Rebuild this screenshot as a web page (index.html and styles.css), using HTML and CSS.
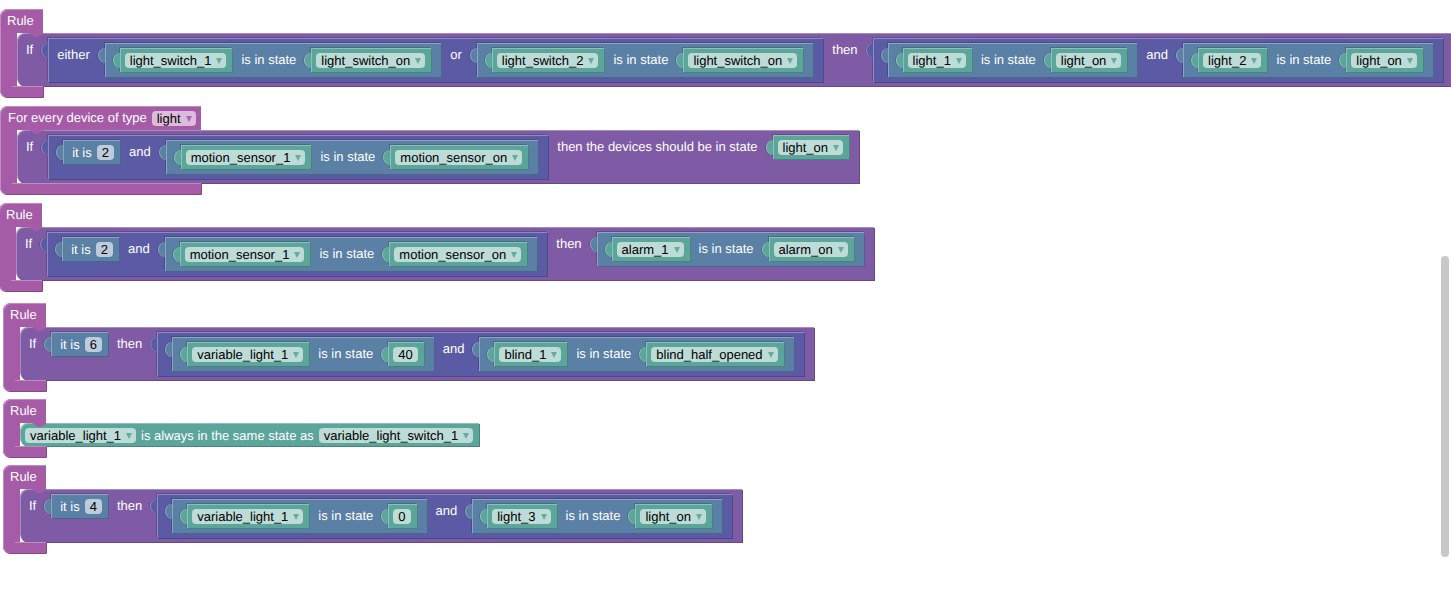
FILE: index.html
```html
<!DOCTYPE html>
<html>
<head>
<meta charset="utf-8">
<link rel="stylesheet" href="styles.css">
</head>
<body>
<div class="canvas">

  <!-- Rule 1 -->
  <div class="tl r1 rule c-pink">
    <div class="head w-rule">Rule</div>
    <div class="body">
      <div class="blk stmt c-purple">
        <span class="lbl">If</span>
        <div class="blk val c-blue">
          <span class="lbl">either</span>
          <div class="blk val c-steel">
            <div class="blk val fb c-teal"><span class="fld">light_switch_1<i class="arr"></i></span></div>
            <span class="lbl">is in state</span>
            <div class="blk val fb c-teal"><span class="fld">light_switch_on<i class="arr"></i></span></div>
          </div>
          <span class="lbl">or</span>
          <div class="blk val c-steel">
            <div class="blk val fb c-teal"><span class="fld">light_switch_2<i class="arr"></i></span></div>
            <span class="lbl">is in state</span>
            <div class="blk val fb c-teal"><span class="fld">light_switch_on<i class="arr"></i></span></div>
          </div>
        </div>
        <span class="lbl">then</span>
        <div class="blk val c-blue">
          <div class="blk val c-steel">
            <div class="blk val fb c-teal"><span class="fld">light_1<i class="arr"></i></span></div>
            <span class="lbl">is in state</span>
            <div class="blk val fb c-teal"><span class="fld">light_on<i class="arr"></i></span></div>
          </div>
          <span class="lbl">and</span>
          <div class="blk val c-steel">
            <div class="blk val fb c-teal"><span class="fld">light_2<i class="arr"></i></span></div>
            <span class="lbl">is in state</span>
            <div class="blk val fb c-teal"><span class="fld">light_on<i class="arr"></i></span></div>
          </div>
        </div>
      </div>
    </div>
    <div class="foot w-rule"></div>
  </div>

  <!-- Rule 2: For every device -->
  <div class="tl r2 rule c-pink">
    <div class="head head-type w-type"><span class="htxt">For every device of type</span><span class="fld">light<i class="arr"></i></span></div>
    <div class="body">
      <div class="blk stmt c-purple">
        <span class="lbl">If</span>
        <div class="blk val c-blue">
          <div class="blk val fb c-steel"><span class="lbl">it is</span><span class="fld">2</span></div>
          <span class="lbl">and</span>
          <div class="blk val c-steel">
            <div class="blk val fb c-teal"><span class="fld">motion_sensor_1<i class="arr"></i></span></div>
            <span class="lbl">is in state</span>
            <div class="blk val fb c-teal"><span class="fld">motion_sensor_on<i class="arr"></i></span></div>
          </div>
        </div>
        <span class="lbl">then the devices should be in state</span>
        <div class="blk val fb c-teal"><span class="fld">light_on<i class="arr"></i></span></div>
      </div>
    </div>
    <div class="foot w-type"></div>
  </div>

  <!-- Rule 3 -->
  <div class="tl r3 rule c-pink">
    <div class="head w-rule">Rule</div>
    <div class="body">
      <div class="blk stmt c-purple">
        <span class="lbl">If</span>
        <div class="blk val c-blue">
          <div class="blk val fb c-steel"><span class="lbl">it is</span><span class="fld">2</span></div>
          <span class="lbl">and</span>
          <div class="blk val c-steel">
            <div class="blk val fb c-teal"><span class="fld">motion_sensor_1<i class="arr"></i></span></div>
            <span class="lbl">is in state</span>
            <div class="blk val fb c-teal"><span class="fld">motion_sensor_on<i class="arr"></i></span></div>
          </div>
        </div>
        <span class="lbl">then</span>
        <div class="blk val c-steel">
          <div class="blk val fb c-teal"><span class="fld">alarm_1<i class="arr"></i></span></div>
          <span class="lbl">is in state</span>
          <div class="blk val fb c-teal"><span class="fld">alarm_on<i class="arr"></i></span></div>
        </div>
      </div>
    </div>
    <div class="foot w-rule"></div>
  </div>

  <!-- Rule 4 -->
  <div class="tl r4 rule c-pink">
    <div class="head w-rule">Rule</div>
    <div class="body">
      <div class="blk stmt c-purple">
        <span class="lbl">If</span>
        <div class="blk val fb c-steel"><span class="lbl">it is</span><span class="fld">6</span></div>
        <span class="lbl">then</span>
        <div class="blk val c-blue">
          <div class="blk val c-steel">
            <div class="blk val fb c-teal"><span class="fld">variable_light_1<i class="arr"></i></span></div>
            <span class="lbl">is in state</span>
            <div class="blk val fb c-teal"><span class="fld">40</span></div>
          </div>
          <span class="lbl">and</span>
          <div class="blk val c-steel">
            <div class="blk val fb c-teal"><span class="fld">blind_1<i class="arr"></i></span></div>
            <span class="lbl">is in state</span>
            <div class="blk val fb c-teal"><span class="fld">blind_half_opened<i class="arr"></i></span></div>
          </div>
        </div>
      </div>
    </div>
    <div class="foot w-rule"></div>
  </div>

  <!-- Rule 5 -->
  <div class="tl r5 rule c-pink">
    <div class="head w-rule">Rule</div>
    <div class="body">
      <div class="blk stmt fb same c-teal">
        <span class="fld">variable_light_1<i class="arr"></i></span>
        <span class="lbl">is always in the same state as</span>
        <span class="fld">variable_light_switch_1<i class="arr"></i></span>
      </div>
    </div>
    <div class="foot w-rule"></div>
  </div>

  <!-- Rule 6 -->
  <div class="tl r6 rule c-pink">
    <div class="head w-rule">Rule</div>
    <div class="body">
      <div class="blk stmt c-purple">
        <span class="lbl">If</span>
        <div class="blk val fb c-steel"><span class="lbl">it is</span><span class="fld">4</span></div>
        <span class="lbl">then</span>
        <div class="blk val c-blue">
          <div class="blk val c-steel">
            <div class="blk val fb c-teal"><span class="fld">variable_light_1<i class="arr"></i></span></div>
            <span class="lbl">is in state</span>
            <div class="blk val fb c-teal"><span class="fld">0</span></div>
          </div>
          <span class="lbl">and</span>
          <div class="blk val c-steel">
            <div class="blk val fb c-teal"><span class="fld">light_3<i class="arr"></i></span></div>
            <span class="lbl">is in state</span>
            <div class="blk val fb c-teal"><span class="fld">light_on<i class="arr"></i></span></div>
          </div>
        </div>
      </div>
    </div>
    <div class="foot w-rule"></div>
  </div>

  <div class="vscroll"></div>
</div>
</body>
</html>
```

FILE: styles.css
```css
* { box-sizing: border-box; }

html, body {
  margin: 0;
  padding: 0;
  background: #fff;
  overflow: hidden;
}

body {
  font-family: "Liberation Sans", Arial, sans-serif;
  font-size: 13px;
  text-rendering: geometricPrecision;
}

.canvas {
  position: relative;
  width: 1451px;
  height: 600px;
  overflow: hidden;
}

/* free-canvas placement of top-level blocks */
.tl { position: absolute; }
.r1 { left: 0; top: 9px; }
.r2 { left: 0; top: 106px; }
.r3 { left: -1px; top: 203px; }
.r4 { left: 3px; top: 303px; }
.r5 { left: 3px; top: 399px; }
.r6 { left: 3px; top: 465px; }

/* colours (Blockly style hues) */
.c-pink   { --bg: #a55ba5; --lt: #c08cc0; --dk: #844984; --fd: #dbbddb; --rule: #a55ba5; --rule-lt: #c08cc0; }
.c-purple { --bg: #805ba5; --lt: #a68cc0; --dk: #664984; --fd: #ccbddb; }
.c-blue   { --bg: #5b5ba5; --lt: #8c8cc0; --dk: #494984; --fd: #bdbddb; }
.c-steel  { --bg: #5b80a5; --lt: #8ca6c0; --dk: #496684; --fd: #bdccdb; }
.c-teal   { --bg: #5ba59a; --lt: #8cc0b8; --dk: #49847b; --fd: #bddbd7; }

/* rule (C-shaped) block */
.rule {
  display: flex;
  flex-direction: column;
  align-items: flex-start;
}

.head {
  height: 24px;
  background: var(--bg);
  color: #fff;
  line-height: 24px;
  padding: 0 0 0 7px;
  border-radius: 8px 1px 0 0;
  white-space: nowrap;
  box-shadow: inset 1px 1px 0 var(--lt);
}

.w-rule { width: 43px; }
.w-type { width: 201px; }

.head-type {
  display: flex;
  align-items: center;
  padding-left: 8px;
}
.head-type .fld { margin-left: 5px; }

.body {
  display: flex;
  align-items: flex-start;
  padding-left: 17px;
  background: linear-gradient(to right, var(--rule) 17px, transparent 17px);
  box-shadow: inset 1px 0 0 var(--lt);
}

.foot {
  position: relative;
  height: 11px;
  background: var(--bg);
  border-radius: 0 0 1px 6px;
  box-shadow: 1px 1px 0 var(--dk), inset 1px 0 0 var(--lt);
}
.foot::before {
  content: "";
  position: absolute;
  left: 12px;
  right: 0;
  top: 0;
  height: 1px;
  background: var(--lt);
}

/* generic block */
.blk {
  position: relative;
  display: inline-flex;
  align-items: flex-start;
  padding: 5px 0 5px 0;
  background: var(--bg);
  box-shadow: inset 1px 1px 0 rgba(255, 255, 255, 0.3), 1px 1px 0 var(--dk);
  white-space: nowrap;
}
.blk.fb { padding: 5px 0 4px 0; }
.blk.c-purple { padding-bottom: 4px; }
.blk.same { padding-bottom: 3px; }

/* statement block sitting inside a rule */
.stmt {
  border-radius: 8px 0 0 8px;
  flex: none;
}
.stmt::before {
  content: "";
  position: absolute;
  top: 0;
  left: 12px;
  width: 15px;
  height: 4px;
  background: var(--rule);
  clip-path: polygon(0 0, 100% 0, 60% 100%, 40% 100%);
}
.stmt::after {
  content: "";
  position: absolute;
  bottom: -4px;
  left: 12px;
  width: 15px;
  height: 4px;
  background: var(--bg);
  clip-path: polygon(0 0, 100% 0, 60% 100%, 40% 100%);
}

/* value (output) blocks plugged into inline inputs */
.blk > .val {
  margin-left: 15px;
  flex: none;
  box-shadow: inset 1px 1px 0 rgba(255, 255, 255, 0.3), 1px 1px 0 var(--dk), -1px -1px 0 rgba(0, 0, 0, 0.18);
}
.val::before {
  content: "";
  position: absolute;
  left: -7px;
  top: 5px;
  width: 7px;
  height: 15px;
  background: var(--bg);
  border-radius: 7px 0 0 7px / 7.5px 0 0 7.5px;
  box-shadow: inset 1px 0 0 rgba(255, 255, 255, 0.3), -1px 0 0 rgba(0, 0, 0, 0.15);
}

/* labels */
.lbl {
  color: #fff;
  line-height: 15px;
  margin: 4px 0 0 9px;
  white-space: nowrap;
  flex: none;
}
.fb > .lbl { margin-top: 0; }
.fld + .lbl { margin-left: 5px; }

/* editable fields */
.fld {
  display: inline-flex;
  align-items: center;
  height: 15px;
  line-height: 15px;
  padding: 0 5px;
  background: var(--fd);
  color: #000;
  border-radius: 4px;
  white-space: nowrap;
  flex: none;
}
.blk > .fld { margin-left: 5px; }

.arr {
  display: inline-block;
  margin-left: 5px;
  margin-right: -1px;
  margin-top: 1px;
  width: 0;
  height: 0;
  border-left: 3px solid transparent;
  border-right: 3px solid transparent;
  border-top: 6px solid var(--bg);
  opacity: 0.9;
}

.blk > .val:last-child { margin-right: 10px; }
.blk > .fld:last-child { margin-right: 6px; }
.blk > .lbl:last-child { margin-right: 9px; }

/* workspace scrollbar */
.vscroll {
  position: absolute;
  left: 1441px;
  top: 256px;
  width: 8px;
  height: 301px;
  background: #c8c8c8;
  border-radius: 4px;
}
```
